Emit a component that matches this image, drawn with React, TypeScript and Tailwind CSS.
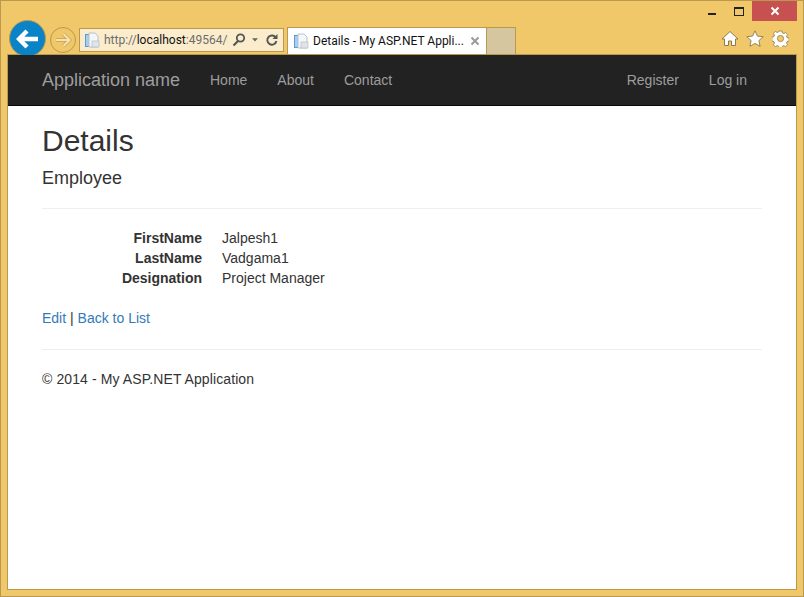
import React from "react";

const PageIcon = ({ className }: { className?: string }) => (
  <svg viewBox="0 0 16 16" width="16" height="16" className={className}>
    <rect x="1" y="2" width="5" height="13" fill="#5b9bd5" />
    <rect x="2" y="3" width="3" height="11" fill="#a8cdee" />
    <path d="M5 1h6l3 3v11H5z" fill="#f4f6f8" stroke="#b8c2cc" strokeWidth="1" />
    <rect x="8" y="9" width="7" height="6" fill="#dfe4ea" stroke="#b4bec8" strokeWidth="0.7" />
  </svg>
);

const NavLink = ({ children }: { children: React.ReactNode }) => (
  <a className="text-[14px] leading-[20px] text-[#9d9d9d]">{children}</a>
);

const gearPath =
  "M7 1h3l.4 2 1.5.6 1.7-1.1 2 2-1.1 1.7.6 1.5 2 .4v3l-2 .4-.6 1.5 1.1 1.7-2 2-1.7-1.1-1.5.6-.4 2H7l-.4-2-1.5-.6-1.7 1.1-2-2 1.1-1.7-.6-1.5-2-.4V7l2-.4.6-1.5-1.1-1.7 2-2 1.7 1.1 1.5-.6z";

export default function App() {
  return (
    <div
      className="w-[804px] h-[597px] overflow-hidden flex flex-col bg-[#f0c769] border border-[#b8994f] text-[#333333] text-[14px] leading-[20px]"
      style={{ fontFamily: '"Liberation Sans", Arial, sans-serif' }}
    >
      {/* window chrome */}
      <div className="relative h-[54px] shrink-0">
        {/* window buttons */}
        <div className="flex justify-end items-start pr-[6px]">
          <div className="w-[8px] h-[2px] bg-[#222222] mt-[12px] mr-[18px]" />
          <div className="w-[8px] h-[6px] border border-[#222222] border-t-2 mt-[6px] mr-[8px] box-content" />
          <div className="w-[45px] h-[20px] bg-[#c75050] flex items-center justify-center">
            <svg width="10" height="10" viewBox="0 0 10 10">
              <path d="M1.5 1.5l7 7M8.5 1.5l-7 7" stroke="#fff" strokeWidth="2" />
            </svg>
          </div>
        </div>
        {/* toolbar */}
        <div className="absolute left-[8px] top-[19px] flex items-start">
          <div className="w-[37px] h-[37px] rounded-full bg-[#0a84c6] border border-[#b8994f] box-border flex items-center justify-center">
            <svg width="24" height="22" viewBox="0 0 24 22">
              <path d="M11 3l-8 8 8 8M3.5 11H22" fill="none" stroke="#fff" strokeWidth="4.4" />
            </svg>
          </div>
          <div className="w-[26px] h-[26px] rounded-full border border-[#b8994f] ml-[4px] mt-[7px] flex items-center justify-center">
            <svg width="18" height="16" viewBox="0 0 18 16">
              <path d="M9.5 2l6 6-6 6M15 8H2" fill="none" stroke="#c09f55" strokeWidth="3.6" />
              <path d="M9.5 2l6 6-6 6M15 8H2" fill="none" stroke="#f8e2ae" strokeWidth="2.2" />
            </svg>
          </div>
          <div className="w-[205px] h-[24px] ml-[3px] mt-[8px] bg-[#fbeccb] border border-[#b8994f] flex items-center pl-[4px]">
            <PageIcon className="shrink-0" />
            <div
              className="w-[124px] ml-[4px] overflow-hidden whitespace-nowrap text-[12px] text-[#6d6d6d] leading-[22px]"
              style={{ fontFamily: 'Roboto, sans-serif' }}
            >
              http://<span className="text-[#111111]">localhost</span>:49564/Employee
            </div>
            <svg width="16" height="16" viewBox="0 0 16 16" className="ml-[3px] shrink-0">
              <circle cx="9.5" cy="6" r="3.7" fill="none" stroke="#555" strokeWidth="1.8" />
              <path d="M7 9l-4.5 4.5" stroke="#555" strokeWidth="2.2" />
            </svg>
            <svg width="6" height="4" viewBox="0 0 8 5" className="ml-[5px] shrink-0">
              <path d="M0 0h8L4 4.5z" fill="#666" />
            </svg>
            <svg width="14" height="14" viewBox="0 0 14 14" className="ml-[7px] shrink-0">
              <path d="M11 5a4.6 4.6 0 1 0 .4 3" fill="none" stroke="#555" strokeWidth="1.9" />
              <path d="M12.5 1v5h-5z" fill="#555" />
            </svg>
          </div>
          <div className="w-[200px] h-[27px] ml-[3px] mt-[7px] bg-white border border-[#b8994f] border-b-0 flex items-center pl-[5px]">
            <PageIcon className="shrink-0" />
            <span
              className="ml-[4px] text-[12px] text-[#111111] whitespace-nowrap"
              style={{ fontFamily: 'Roboto, sans-serif' }}
            >
              Details - My ASP.NET Appli...
            </span>
            <svg width="10" height="10" viewBox="0 0 10 10" className="ml-[6px] shrink-0">
              <path d="M1.5 1.5l7 7M8.5 1.5l-7 7" stroke="#9a9a9a" strokeWidth="2" />
            </svg>
          </div>
          <div className="w-[29px] h-[27px] mt-[7px] bg-[#d5c6a0] border border-l-0 border-[#b8994f] border-b-0" />
        </div>
        {/* tools */}
        <div className="absolute right-[14px] top-[29px] flex items-center gap-[7px]">
          <svg width="18" height="17" viewBox="0 0 18 17">
            <path d="M9 1.5L1 9h2.5v6.5h4V11h3v4.5h4V9H17z" fill="#fff" stroke="#8d7a4d" strokeWidth="1" />
          </svg>
          <svg width="18" height="17" viewBox="0 0 18 17">
            <path d="M9 .8l2.4 5.3 5.8.6-4.3 3.9 1.2 5.7L9 13.4l-5.1 2.9 1.2-5.7L.8 6.7l5.8-.6z" fill="#fff" stroke="#8d7a4d" strokeWidth="0.9" />
          </svg>
          <svg width="17" height="17" viewBox="0 0 17 17" className="ml-[1px]">
            <path d={gearPath} fill="#fff" stroke="#8d7a4d" strokeWidth="0.8" />
            <circle cx="8.5" cy="8.5" r="3.1" fill="#f0c769" stroke="#8d7a4d" strokeWidth="0.8" />
          </svg>
        </div>
      </div>

      {/* page */}
      <div className="mx-[7px] w-[788px] h-[534px] bg-white border-0 outline outline-1 outline-[#b8994f]">
        <nav className="relative h-[51px] bg-[#222222] border-b border-[#080808] px-[34px] flex items-center">
          <a className="text-[18px] text-[#9d9d9d] leading-[20px] w-[168px]">Application name</a>
          <div className="flex gap-[30px]">
            <NavLink>Home</NavLink>
            <NavLink>About</NavLink>
            <NavLink>Contact</NavLink>
          </div>
          <div className="ml-auto flex gap-[30px] pr-[15px]">
            <NavLink>Register</NavLink>
            <NavLink>Log in</NavLink>
          </div>
        </nav>
        <main className="px-[34px]">
          <h1 className="text-[30px] leading-[33px] font-normal mt-[18px] text-[#333333]">Details</h1>
          <h4 className="text-[18px] leading-[20px] font-normal mt-[11px] text-[#333333]">Employee</h4>
          <hr className="border-0 border-t border-[#eeeeee] mt-[20px] w-[720px]" />
          <dl className="mt-[19px] grid grid-cols-[160px_1fr] gap-x-[20px]">
            <dt className="font-bold text-right">FirstName</dt>
            <dd>Jalpesh1</dd>
            <dt className="font-bold text-right">LastName</dt>
            <dd>Vadgama1</dd>
            <dt className="font-bold text-right">Designation</dt>
            <dd>Project Manager</dd>
          </dl>
          <p className="mt-[20px]">
            <a className="text-[#337ab7]">Edit</a> | <a className="text-[#337ab7]">Back to List</a>
          </p>
          <hr className="border-0 border-t border-[#eeeeee] mt-[21px] w-[720px]" />
          <p className="mt-[19px] tracking-[0.1px]">© 2014 - My ASP.NET Application</p>
        </main>
      </div>
    </div>
  );
}
